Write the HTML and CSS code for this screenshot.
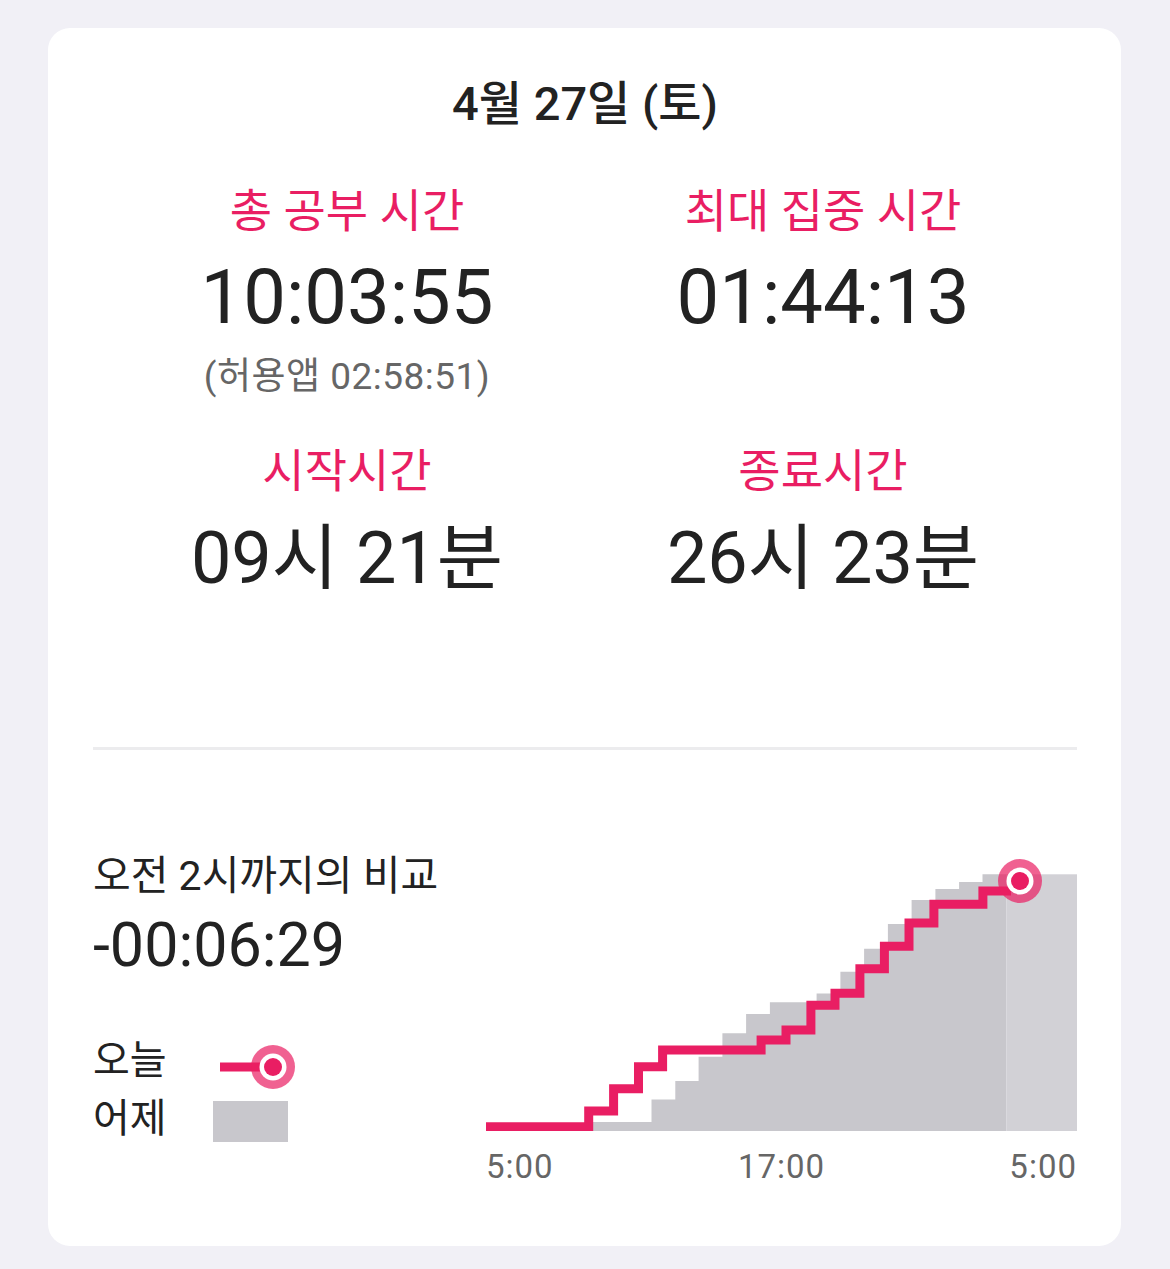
FILE: index.html
```html
<html>
<head>
<link rel="stylesheet" href="styles.css">
</head>
<body>
<div class="card">
<h1 class="date">4월 27일 (토)</h1>
<div class="stats">
<div class="stat">
<div class="stat-label">총 공부 시간</div>
<div class="stat-value">10:03:55</div>
<div class="stat-sub">(허용앱 02:58:51)</div>
</div>
<div class="stat">
<div class="stat-label">최대 집중 시간</div>
<div class="stat-value">01:44:13</div>
</div>
<div class="stat">
<div class="stat-label">시작시간</div>
<div class="stat-time">09시 21분</div>
</div>
<div class="stat">
<div class="stat-label">종료시간</div>
<div class="stat-time">26시 23분</div>
</div>
</div>
<hr class="divider">
<div class="compare">
<div class="compare-info">
<div class="compare-title">오전 2시까지의 비교</div>
<div class="compare-diff">-00:06:29</div>
<div class="legend">
<span class="legend-text">오늘</span>
<svg class="legend-today" width="82" height="44" viewBox="0 0 82 44">
<line x1="7" y1="22" x2="60" y2="22" stroke="#e91e63" stroke-width="9"/>
<circle cx="60" cy="22" r="22" fill="#e91e63" fill-opacity="0.7"/>
<circle cx="60" cy="22" r="13.5" fill="#fff"/>
<circle cx="60" cy="22" r="9" fill="#e91e63"/>
</svg>
<span class="legend-text">어제</span>
<span class="legend-yesterday"></span>
</div>
</div>
<div class="chart">
<svg class="chart-svg" width="591" height="273" viewBox="0 0 591 273">
<!-- yesterday -->
<polygon fill="#c8c7cc" points="107,273 107,264 165.5,264 165.5,241.4 189.3,241.4 189.3,223 212.6,223 212.6,198.7 236.4,198.7 236.4,175.3 260.1,175.3 260.1,156 283.9,156 283.9,144.3 330.6,144.3 330.6,135.4 354.4,135.4 354.4,113.7 378.1,113.7 378.1,90.7 401.9,90.7 401.9,66 425.6,66 425.6,42 449.4,42 449.4,31 473.1,31 473.1,24 496.5,24 496.5,16.3 520.3,16.3 520.3,273"/>
<rect x="520.3" y="16.3" width="70.7" height="256.7" fill="#d2d1d6"/>
<!-- today -->
<path d="M0,268.7 H102.7 V253 H127.6 V230.7 H152.5 V208.7 H176.6 V192 H275.1 V182 H300 V172 H324.9 V147.3 H349 V135.3 H373.9 V110.7 H398.4 V88.3 H423 V65 H447.9 V46.3 H496.9 V33 H525" fill="none" stroke="#e91e63" stroke-width="9"/>
<circle cx="534" cy="23" r="22" fill="#e91e63" fill-opacity="0.7"/>
<circle cx="534" cy="23" r="13.5" fill="#fff"/>
<circle cx="534" cy="23" r="9" fill="#e91e63"/>
</svg>
<div class="axis">
<span>5:00</span>
<span>17:00</span>
<span>5:00</span>
</div>
</div>
</div>
</div>
</body>
</html>
```
FILE: styles.css
```css
body {
  margin: 0;
  background-color: #f1f0f6;
  font-family: Roboto, "Noto Sans CJK KR", sans-serif;
  color: #222;
}

.card {
  margin: 28px 49px 24px 48px;
  padding: 48px 44px 59px 45px;
  background-color: #fff;
  border-radius: 22px;
}

.date {
  margin: 0;
  text-align: center;
  font-size: 47px;
  line-height: 56px;
  font-weight: 500;
}

.stats {
  display: grid;
  grid-template-columns: 476px 476px;
  justify-content: center;
  row-gap: 46px;
  margin-top: 53px;
}

.stat {
  display: flex;
  flex-direction: column;
  align-items: center;
}

.stat-label {
  font-size: 46px;
  line-height: 52px;
  color: #e91e63;
}

.stat-value {
  margin-top: 16px;
  font-size: 76px;
  line-height: 88px;
}

.stat-sub {
  margin-top: 14px;
  font-size: 37px;
  line-height: 44px;
  letter-spacing: 0.5px;
  color: #666;
}

.stat-time {
  margin-top: 19px;
  font-size: 72px;
  line-height: 86px;
}

.divider {
  margin: 145px 0 0;
  height: 3px;
  border: none;
  background-color: #ececee;
}

.compare {
  display: flex;
  justify-content: space-between;
  margin-top: 103px;
}

.compare-title {
  font-size: 41px;
  line-height: 46px;
}

.compare-diff {
  margin-top: 12px;
  font-size: 61px;
  line-height: 68px;
}

.legend {
  display: grid;
  grid-template-columns: 120px auto;
  grid-auto-rows: 58px;
  align-items: center;
  margin-top: 55px;
}

.legend-text {
  font-size: 40px;
  line-height: 44px;
  padding-bottom: 5px;
}

.legend-today {
  display: block;
  margin-top: 8px;
}

.legend-yesterday {
  display: block;
  width: 75px;
  height: 41px;
  background-color: #c8c7cc;
}

.chart {
  margin-top: 5px;
  width: 591px;
}

.chart-svg {
  display: block;
}

.axis {
  display: flex;
  justify-content: space-between;
  margin-top: 16px;
  font-size: 33px;
  line-height: 40px;
  color: #666;
  letter-spacing: 1px;
}
```
